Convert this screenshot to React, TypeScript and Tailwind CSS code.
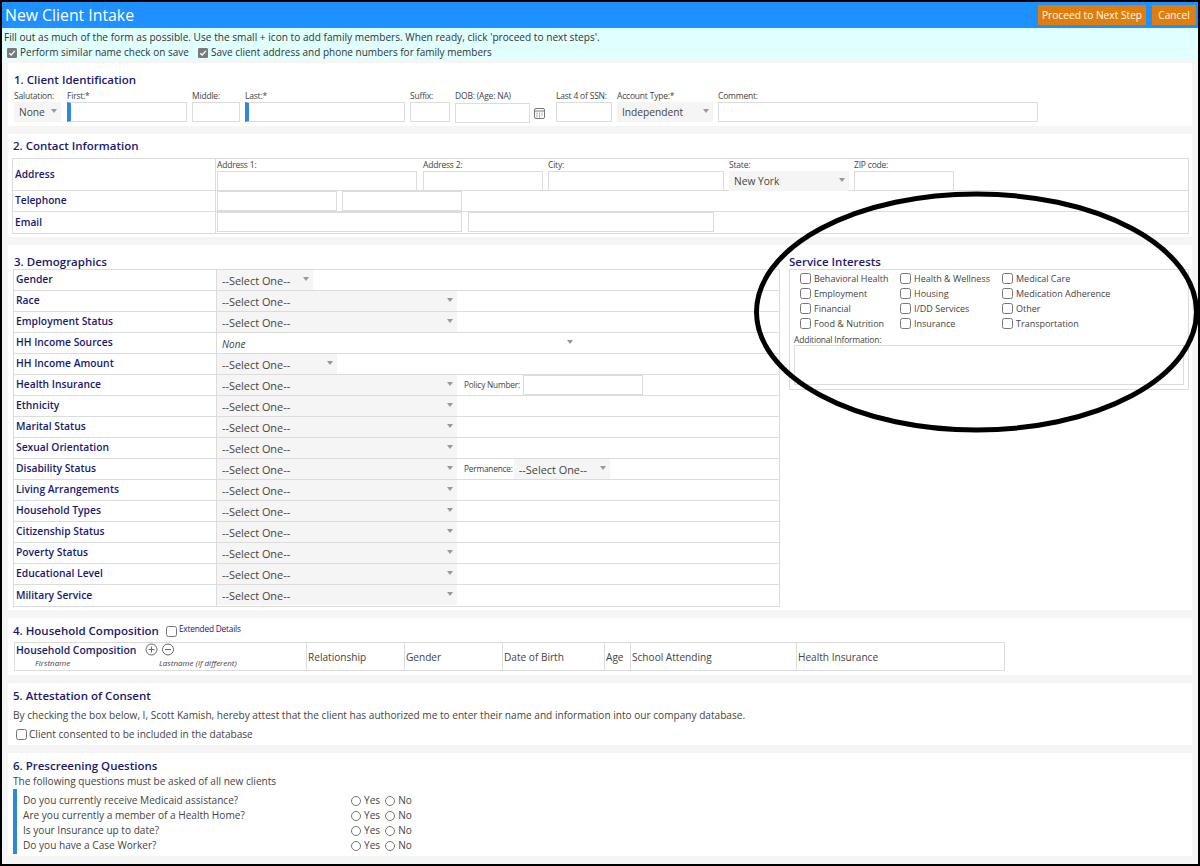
const font = "font-['Open_Sans','Noto_Sans',sans-serif]";

const demographics = [
  { label: "Gender", w: "w-[96px]" },
  { label: "Race", w: "w-[240px]" },
  { label: "Employment Status", w: "w-[240px]" },
  { label: "HH Income Sources", w: "w-[360px]", none: true },
  { label: "HH Income Amount", w: "w-[120px]" },
  { label: "Health Insurance", w: "w-[240px]", policy: true },
  { label: "Ethnicity", w: "w-[240px]" },
  { label: "Marital Status", w: "w-[240px]" },
  { label: "Sexual Orientation", w: "w-[240px]" },
  { label: "Disability Status", w: "w-[240px]", permanence: true },
  { label: "Living Arrangements", w: "w-[240px]" },
  { label: "Household Types", w: "w-[240px]" },
  { label: "Citizenship Status", w: "w-[240px]" },
  { label: "Poverty Status", w: "w-[240px]" },
  { label: "Educational Level", w: "w-[240px]" },
  { label: "Military Service", w: "w-[240px]" },
];

const interests = [
  ["Behavioral Health", "Health & Wellness", "Medical Care"],
  ["Employment", "Housing", "Medication Adherence"],
  ["Financial", "I/DD Services", "Other"],
  ["Food & Nutrition", "Insurance", "Transportation"],
];

const questions = [
  "Do you currently receive Medicaid assistance?",
  "Are you currently a member of a Health Home?",
  "Is your Insurance up to date?",
  "Do you have a Case Worker?",
];

const household = [
  { label: "Relationship", w: "w-[98px]" },
  { label: "Gender", w: "w-[98px]" },
  { label: "Date of Birth", w: "w-[102px]" },
  { label: "Age", w: "w-[26px]" },
  { label: "School Attending", w: "w-[166px]" },
  { label: "Health Insurance", w: "flex-1" },
];

function Input({ className = "" }: { className?: string }) {
  return <div className={`h-[20px] border border-[#dcdcdc] bg-white shrink-0 ${className}`} />;
}

function Select({ value, className = "", plain }: { value: string; className?: string; plain?: boolean }) {
  return (
    <div className={`h-[20px] shrink-0 flex items-center justify-between pl-[5px] pr-[4px] text-[#444] ${plain ? "bg-white" : "bg-[#f5f5f5]"} ${className}`}>
      <span className="whitespace-nowrap">{value}</span>
      <span className="mb-[5px] w-0 h-0 shrink-0 border-l-[3px] border-r-[3px] border-t-[4px] border-l-transparent border-r-transparent border-t-[#999]" />
    </div>
  );
}

function Field({ label, children, className = "" }: { label: string; children: React.ReactNode; className?: string }) {
  return (
    <div className={`shrink-0 ${className}`}>
      <div className="h-[12px] text-[8.5px] leading-[12px] tracking-[-0.2px] text-[#444] whitespace-nowrap">{label}</div>
      {children}
    </div>
  );
}

function Box({ className = "" }: { className?: string }) {
  return <span className={`inline-block w-[11px] h-[11px] shrink-0 rounded-[2.5px] border border-[#767676] bg-white ${className}`} />;
}

function Checked() {
  return (
    <svg width="10" height="10" viewBox="0 0 11 11" className="shrink-0">
      <rect width="11" height="11" rx="1.5" fill="#7a7a7a" />
      <path d="M2.5 5.8 L4.6 7.8 L8.6 3.2" fill="none" stroke="#fff" strokeWidth="1.5" />
    </svg>
  );
}

function Radio({ label }: { label: string }) {
  return (
    <span className="flex items-center gap-[3px]">
      <span className="w-[10px] h-[10px] rounded-full border border-[#767676]" />
      {label}
    </span>
  );
}

function Heading({ children, className = "" }: { children: React.ReactNode; className?: string }) {
  return <div className={`font-semibold text-[#191970] whitespace-nowrap ${className}`}>{children}</div>;
}

export default function App() {
  return (
    <div className={`${font} relative w-[1200px] h-[866px] overflow-hidden border-2 border-black bg-[#f5f5f5] text-[10.1px] text-[#444]`}>
      {/* Title bar */}
      <div className="h-[26px] bg-[#1e90ff] flex items-center justify-between pl-[3px] pr-[2px]">
        <div className="text-[15.8px] leading-[26px] text-white">New Client Intake</div>
        <div className="flex gap-[6px]">
          <div className="h-[20px] w-[108px] bg-[#df7d0d] text-white text-[10.2px] leading-[20px] text-center whitespace-nowrap">Proceed to Next Step</div>
          <div className="h-[20px] w-[44px] bg-[#df7d0d] text-white text-[10.2px] leading-[20px] text-center">Cancel</div>
        </div>
      </div>
      <div className="h-[31px] bg-[#e0ffff] pl-[2px] pt-[2px] text-[#333] leading-[15px] whitespace-nowrap">
        <div className="text-[10.13px]">Fill out as much of the form as possible. Use the small + icon to add family members. When ready, click 'proceed to next steps'.</div>
        <div className="flex items-center pl-[3px] gap-[3px] text-[10px]">
          <Checked />
          <span className="mr-[6px]">Perform similar name check on save</span>
          <Checked />
          <span>Save client address and phone numbers for family members</span>
        </div>
      </div>

      {/* 1 */}
      <section className="mt-[4px] mx-[6px] h-[63px] bg-white pl-[5px] pt-[9px]">
        <Heading className="pl-[1px] text-[11.5px] leading-[16px]">1. Client Identification</Heading>
        <div className="flex gap-[5px] mt-[2px]">
          <Field label="Salutation:" className="w-[49px] pl-[1px]"><Select value="None" className="w-[47px] pl-[4px] pr-[3px] pt-[2px] text-[10.2px]" /></Field>
          <Field label="First:*"><Input className="w-[120px] border-l-4 border-l-[#2d89d9]" /></Field>
          <Field label="Middle:"><Input className="w-[48px]" /></Field>
          <Field label="Last:*"><Input className="w-[160px] border-l-4 border-l-[#2d89d9]" /></Field>
          <Field label="Suffix:"><Input className="w-[40px]" /></Field>
          <Field label="DOB: (Age: NA)" className="w-[96px]">
            <div className="flex items-center gap-[3px] pt-[1px]">
              <Input className="w-[75px] h-[19px]" />
              <svg width="13" height="13" viewBox="0 0 13 13" fill="none" stroke="#777">
                <rect x="1.5" y="1.5" width="10" height="10" rx="1.5" />
                <path d="M1.5 4h10M3.500 6.200h1M6 6.200h1M8.500 6.200h1M3.500 8h1M6 8h1M8.500 8h1M3.500 9.800h1M6 9.800h1" />
              </svg>
            </div>
          </Field>
          <Field label="Last 4 of SSN:"><Input className="w-[56px]" /></Field>
          <Field label="Account Type:*"><Select value="Independent" className="w-[96px] pt-[2px] text-[10.2px]" /></Field>
          <Field label="Comment:"><Input className="w-[320px]" /></Field>
        </div>
      </section>

      {/* 2 */}
      <section className="mt-[8px] mx-[6px] h-[103px] bg-white pl-[4px] pr-[3px] pt-[4px]">
        <Heading className="pl-[1px] text-[11.500px] leading-[16px]">2. Contact Information</Heading>
        <div className="mt-[4px] border border-[#dcdcdc]">
          <div className="flex h-[32px] border-b border-[#dcdcdc]">
            <Heading className="w-[202px] self-center pl-[2px] text-[10.2px]">Address</Heading>
            <div className="flex border-l border-[#dcdcdc] pl-[1px]">
              <Field label="Address 1:" className="mr-[6px]"><Input className="w-[200px]" /></Field>
              <Field label="Address 2:" className="mr-[5px]"><Input className="w-[120px]" /></Field>
              <Field label="City:" className="mr-[5px]"><Input className="w-[176px]" /></Field>
              <Field label="State:" className="mr-[5px]"><Select value="New York" className="w-[120px] pt-[2px] text-[10.2px]" /></Field>
              <Field label="ZIP code:"><Input className="w-[100px]" /></Field>
            </div>
          </div>
          <div className="flex h-[21px] border-b border-[#dcdcdc] items-stretch">
            <Heading className="w-[202px] self-center pl-[2px] text-[10.2px]">Telephone</Heading>
            <div className="flex gap-[5px] border-l border-[#dcdcdc] pl-[1px]">
              <Input className="w-[120px]" />
              <Input className="w-[120px]" />
            </div>
          </div>
          <div className="flex h-[21px] items-stretch">
            <Heading className="w-[202px] self-center pl-[2px] text-[10.2px]">Email</Heading>
            <div className="flex gap-[6px] border-l border-[#dcdcdc] pl-[1px]">
              <Input className="w-[245px]" />
              <Input className="w-[246px]" />
            </div>
          </div>
        </div>
      </section>

      {/* 3 */}
      <section className="mt-[8px] mx-[6px] h-[365px] bg-white flex pl-[5px] pt-[10px]">
        <div className="w-[767px] shrink-0">
          <Heading className="pl-[1px] text-[11.500px] leading-[14px]">3. Demographics</Heading>
          <div className="border border-[#dcdcdc]">
            {demographics.map((row) => (
              <div key={row.label} className="flex h-[21px] border-b border-[#dcdcdc] last:border-b-0 items-stretch">
                <Heading className="w-[202px] self-center pl-[2px] text-[10.3px]">{row.label}</Heading>
                <div className="flex items-start border-l border-[#dcdcdc] flex-1">
                  <Select value={row.none ? "None" : "--Select One--"} plain={row.none} className={`${row.w} pt-[2px] ${row.none ? "italic text-[10px]" : "text-[10.9px]"}`} />
                  {row.policy && (
                    <div className="flex items-center h-[20px] ml-[7px] text-[8.300px] tracking-[-0.2px] whitespace-nowrap">
                      <span>Policy Number:</span>
                      <Input className="w-[120px] ml-[3px]" />
                    </div>
                  )}
                  {row.permanence && (
                    <div className="flex items-center h-[20px] ml-[7px] text-[8.300px] tracking-[-0.2px] whitespace-nowrap">
                      <span>Permanence:</span>
                      <Select value="--Select One--" className="w-[96px] ml-[1px] pt-[2px] tracking-normal text-[10.9px]" />
                    </div>
                  )}
                </div>
              </div>
            ))}
          </div>
        </div>
        <div className="w-[400px] ml-[9px] shrink-0">
          <Heading className="text-[11.500px] leading-[14px]">Service Interests</Heading>
          <div className="h-[121px] border border-[#dcdcdc] pt-[1px] pl-[4px] pr-[4px]">
            {interests.map((row) => (
              <div key={row[0]} className="flex h-[15px] items-center pl-[6px]">
                {row.map((item, i) => (
                  <label key={item} className={`flex items-center gap-[3px] whitespace-nowrap text-[9px] ${i === 0 ? "w-[100px]" : i === 1 ? "w-[102px]" : ""}`}>
                    <Box />
                    {item}
                  </label>
                ))}
              </div>
            ))}
            <div className="mt-[3px] h-[12px] text-[8.500px] leading-[12px] tracking-[-0.2px]">Additional Information:</div>
            <div className="h-[40px] border border-[#dcdcdc] mt-[-1px]" />
          </div>
        </div>
      </section>

      {/* 4 */}
      <section className="mt-[8px] mx-[6px] h-[57px] bg-white pl-[5px] pt-[5px]">
        <div className="flex items-center h-[16px]">
          <Heading className="text-[11.500px] leading-[16px]">4. Household Composition</Heading>
          <Box className="ml-[7px]" />
          <span className="ml-[2px] mt-[-4px] text-[8.300px] tracking-[-0.2px] text-[#191970]">Extended Details</span>
        </div>
        <div className="mt-[3px] ml-[1px] w-[991px] h-[29px] border border-[#dcdcdc] flex items-stretch">
          <div className="w-[291px] shrink-0 pl-[1px]">
            <div className="flex items-center h-[15px]">
              <Heading className="text-[10.4px] leading-[15px]">Household Composition</Heading>
              <svg width="30" height="14" viewBox="0 0 30 14" fill="none" stroke="#666" className="ml-[9px] mt-[-2px]">
                <circle cx="6.500" cy="6.500" r="5.500" />
                <path d="M3.500 6.500h6M6.500 3.500v6" />
                <circle cx="23" cy="6.500" r="5.500" />
                <path d="M20 6.500h6" />
              </svg>
            </div>
            <div className="flex text-[8px] leading-[10px] italic text-[#444]">
              <span className="ml-[19px] w-[124px]">Firstname</span>
              <span>Lastname (if different)</span>
            </div>
          </div>
          {household.map((c) => (
            <div key={c.label} className={`${c.w} border-l border-[#dcdcdc] pl-[1px] pt-[2px] flex items-center whitespace-nowrap shrink-0`}>{c.label}</div>
          ))}
        </div>
      </section>

      {/* 5 */}
      <section className="mt-[8px] mx-[6px] h-[62px] bg-white pl-[5px] pt-[5px]">
        <Heading className="text-[11.500px] leading-[16px]">5. Attestation of Consent</Heading>
        <div className="mt-[4px] leading-[15px]">By checking the box below, I, Scott Kamish, hereby attest that the client has authorized me to enter their name and information into our company database.</div>
        <div className="mt-[4px] pl-[3px] flex items-center gap-[2px]">
          <Box />
          <span>Client consented to be included in the database</span>
        </div>
      </section>

      {/* 6 */}
      <section className="mt-[8px] mx-[6px] h-[103px] bg-white pl-[5px] pt-[5px]">
        <Heading className="text-[11.500px] leading-[16px]">6. Prescreening Questions</Heading>
        <div className="leading-[15px]">The following questions must be asked of all new clients</div>
        <div className="border-l-4 border-[#2d89d9] pl-[6px] pt-[4px] pb-[1px]">
          {questions.map((q) => (
            <div key={q} className="flex h-[15px] items-center">
              <span className="w-[328px]">{q}</span>
              <span className="flex gap-[5px]">
                <Radio label="Yes" />
                <Radio label="No" />
              </span>
            </div>
          ))}
        </div>
      </section>

      {/* Hand-drawn annotation on top of the screenshot */}
      <svg width="1200" height="866" viewBox="0 0 1200 866" fill="none" className="absolute left-[-2px] top-[-2px] pointer-events-none">
        <ellipse cx="976.500" cy="312" rx="220" ry="118" stroke="#000" strokeWidth="5" />
      </svg>
    </div>
  );
}
